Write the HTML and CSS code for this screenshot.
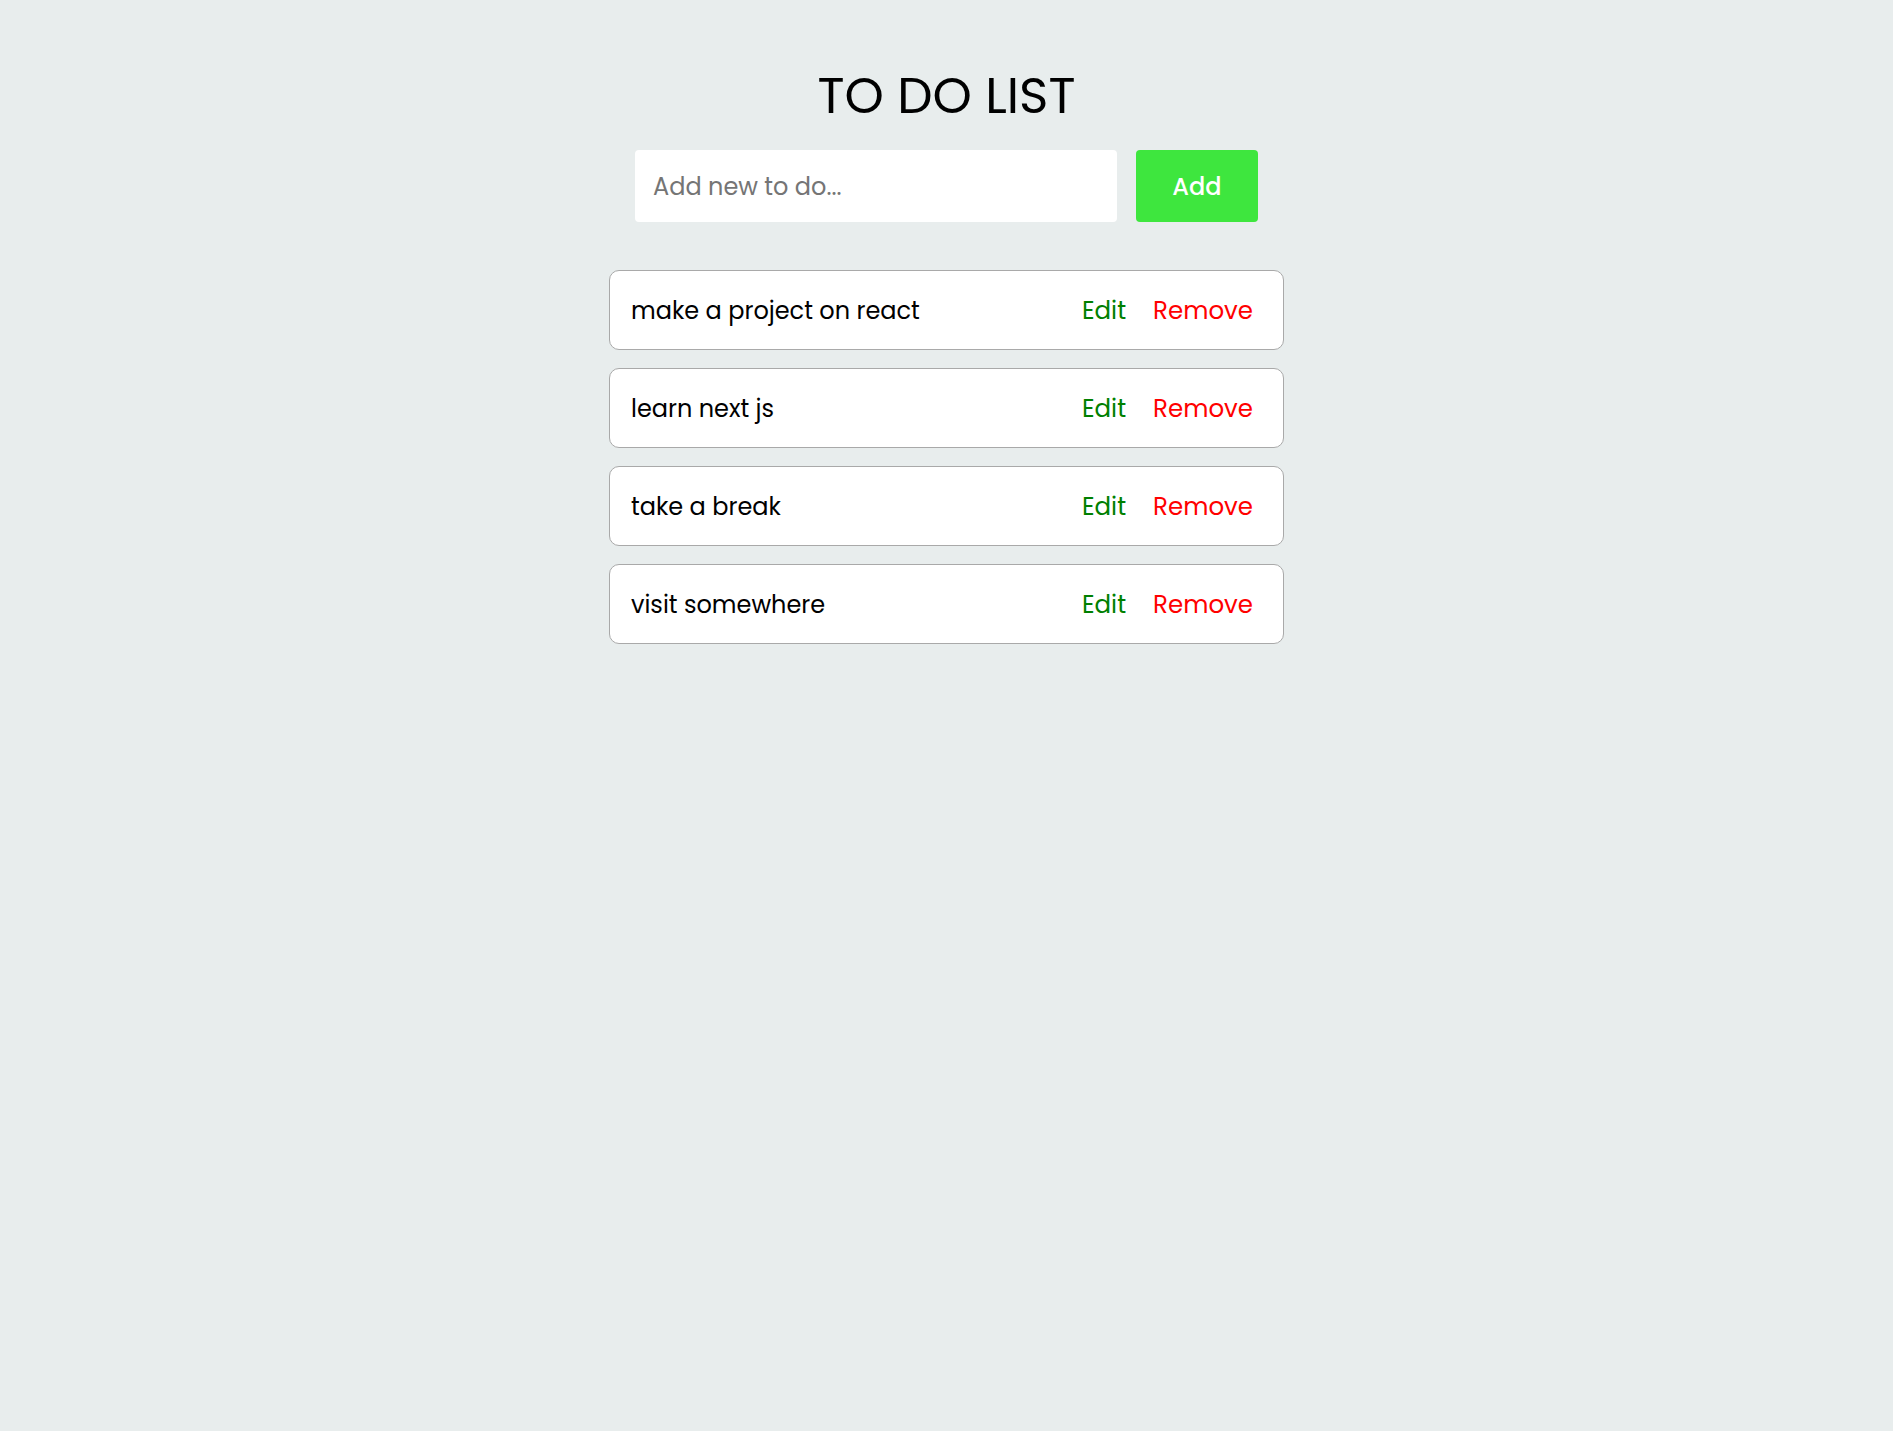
FILE: index.html
```html
<!DOCTYPE html>
<html lang="en">
<head>
<meta charset="utf-8">
<title>To Do List</title>
<link rel="stylesheet" href="styles.css">
</head>
<body>
<main class="app">
  <h1 class="title">TO DO LIST</h1>
  <form class="add-form" onsubmit="return false">
    <input class="add-input" type="text" placeholder="Add new to do...">
    <button class="add-btn" type="submit">Add</button>
  </form>
  <ul class="todo-list">
    <li class="todo-item">
      <span class="todo-text">make a project on react</span>
      <div class="todo-actions">
        <button class="btn-edit" type="button">Edit</button>
        <button class="btn-remove" type="button">Remove</button>
      </div>
    </li>
    <li class="todo-item">
      <span class="todo-text">learn next js</span>
      <div class="todo-actions">
        <button class="btn-edit" type="button">Edit</button>
        <button class="btn-remove" type="button">Remove</button>
      </div>
    </li>
    <li class="todo-item">
      <span class="todo-text">take a break</span>
      <div class="todo-actions">
        <button class="btn-edit" type="button">Edit</button>
        <button class="btn-remove" type="button">Remove</button>
      </div>
    </li>
    <li class="todo-item">
      <span class="todo-text">visit somewhere</span>
      <div class="todo-actions">
        <button class="btn-edit" type="button">Edit</button>
        <button class="btn-remove" type="button">Remove</button>
      </div>
    </li>
  </ul>
</main>
</body>
</html>
```
FILE: styles.css
```css
* { box-sizing: border-box; }
html, body {
  margin: 0;
  padding: 0;
  background: #e8eded;
  min-height: 100%;
}
body {
  font-family: Poppins, "Open Sans", "Noto Sans", sans-serif;
  color: #000;
}
.app {
  display: flex;
  flex-direction: column;
  align-items: center;
  padding-top: 66px;
}
.title {
  margin: 0;
  font-size: 50px;
  font-weight: 400;
  line-height: 60px;
  letter-spacing: 0;
}
.add-form {
  display: flex;
  gap: 19px;
  margin-top: 24px;
}
.add-input {
  width: 482px;
  height: 72px;
  border: none;
  border-radius: 4px;
  background: #fff;
  padding: 0 18px;
  font-family: inherit;
  font-size: 24px;
  color: #000;
  outline: none;
}
.add-input::placeholder { color: #757575; }
.add-btn {
  width: 122px;
  height: 72px;
  border: none;
  border-radius: 4px;
  background: #3ee63e;
  color: #fff;
  font-family: inherit;
  font-size: 24px;
  font-weight: 500;
  cursor: pointer;
}
.todo-list {
  list-style: none;
  margin: 48px 0 0;
  padding: 0;
  width: 675px;
  display: flex;
  flex-direction: column;
  gap: 18px;
}
.todo-item {
  display: flex;
  align-items: center;
  justify-content: space-between;
  height: 80px;
  padding: 0 30px 0 21px;
  background: #fff;
  border: 1px solid #a9a9a9;
  border-radius: 10px;
}
.todo-text {
  font-size: 24px;
}
.todo-actions {
  display: flex;
  gap: 27px;
}
.btn-edit, .btn-remove {
  border: none;
  background: none;
  padding: 0;
  font-family: inherit;
  font-size: 24.5px;
  font-weight: 400;
  cursor: pointer;
}
.btn-edit { color: #008000; }
.btn-remove { color: #ff0000; }
```
